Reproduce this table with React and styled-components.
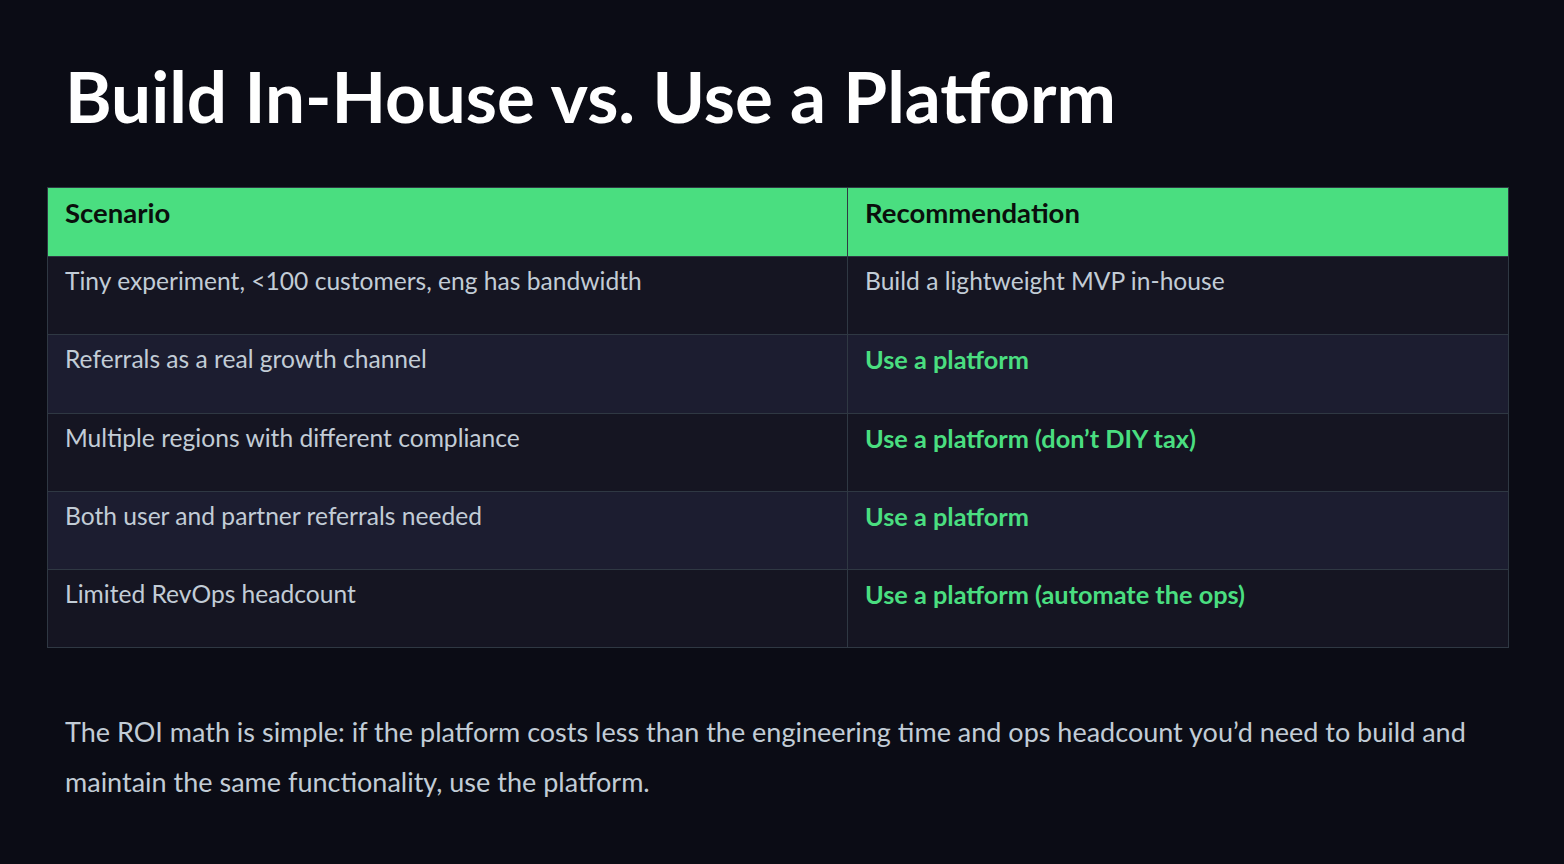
import React from "react";
import styled, { createGlobalStyle } from "styled-components";

const GlobalStyle = createGlobalStyle`
  html, body {
    margin: 0;
    padding: 0;
    background: #0b0c15;
  }
  body {
    font-family: "Lato", "Open Sans", sans-serif;
  }
`;

const Page = styled.div`
  width: 1564px;
  height: 864px;
  box-sizing: border-box;
  padding: 54px 55px 0 47px;
  background: #0b0c15;
  color: #c2ccd6;
`;

const Title = styled.h1`
  margin: 0 0 0 18px;
  font-family: "Lato", sans-serif;
  font-weight: 700;
  font-size: 71px;
  line-height: 84px;
  color: #ffffff;
`;

const Table = styled.table`
  margin-top: 49px;
  width: 1462px;
  border-collapse: collapse;
  border: 1px solid #2f3843;
  font-size: 24.6px;
`;

const HeadCell = styled.th`
  background: #4ade80;
  color: #0a0f0c;
  text-align: left;
  font-weight: 700;
  font-size: 27.5px;
  height: 69px;
  vertical-align: top;
  padding: 8px 17px 0;
  box-sizing: border-box;
  border-right: 1px solid #2f3843;
  width: ${(p) => p.$w || "auto"};
`;

const Row = styled.tr`
  background: ${(p) => (p.$alt ? "#1c1d30" : "#151522")};
  border-top: 1px solid #2f3843;
`;

const Cell = styled.td`
  height: 78.3px;
  box-sizing: border-box;
  vertical-align: top;
  padding: 9px 17px 0;
  border-right: 1px solid #2f3843;
  color: ${(p) => (p.$green ? "#4ade80" : "#c2ccd6")};
  font-weight: ${(p) => (p.$green ? 700 : 400)};
  font-size: ${(p) => (p.$green ? "25.3px" : "24.6px")};
`;

const Note = styled.p`
  width: 1430px;
  margin: 59px 0 0 18px;
  font-size: 27px;
  line-height: 50px;
  color: #c2ccd6;
`;

const rows = [
  ["Tiny experiment, <100 customers, eng has bandwidth", "Build a lightweight MVP in-house", false],
  ["Referrals as a real growth channel", "Use a platform", true],
  ["Multiple regions with different compliance", "Use a platform (don\u2019t DIY tax)", true],
  ["Both user and partner referrals needed", "Use a platform", true],
  ["Limited RevOps headcount", "Use a platform (automate the ops)", true],
];

export default function App() {
  return (
    <Page>
      <GlobalStyle />
      <Title>Build In-House vs. Use a Platform</Title>
      <Table>
        <thead>
          <tr>
            <HeadCell $w="800px">Scenario</HeadCell>
            <HeadCell>Recommendation</HeadCell>
          </tr>
        </thead>
        <tbody>
          {rows.map(([scenario, rec, green], i) => (
            <Row key={scenario} $alt={i % 2 === 1}>
              <Cell>{scenario}</Cell>
              <Cell $green={green}>{rec}</Cell>
            </Row>
          ))}
        </tbody>
      </Table>
      <Note>
        The ROI math is simple: if the platform costs less than the engineering time and ops
        headcount you&rsquo;d need to build and maintain the same functionality, use the platform.
      </Note>
    </Page>
  );
}
